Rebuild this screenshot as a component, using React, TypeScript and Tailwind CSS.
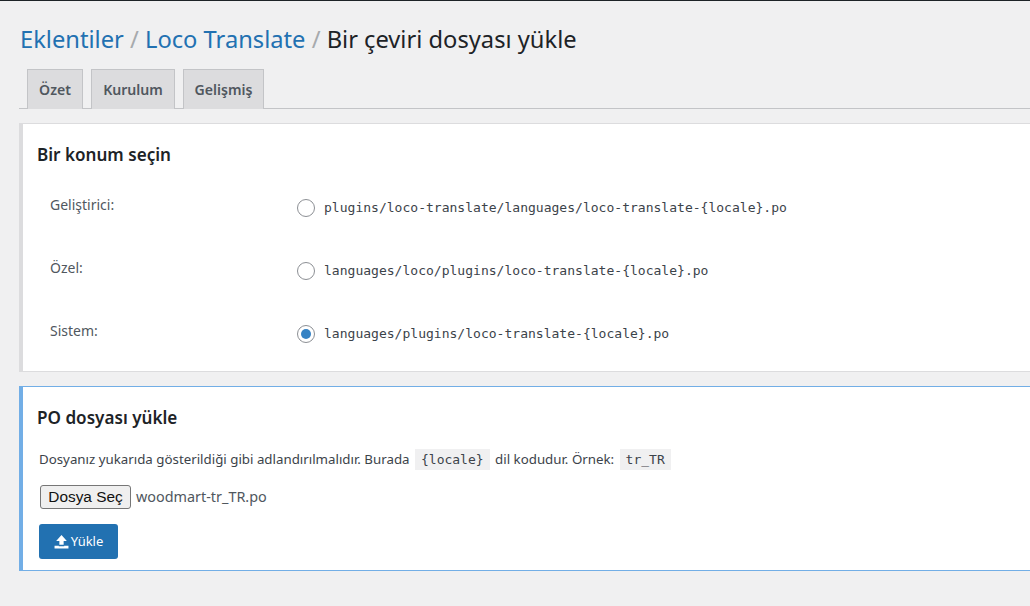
const sans = "font-['Noto_Sans','Open_Sans',sans-serif]";

const tabs = [
  { label: "Özet", width: "w-[56px]" },
  { label: "Kurulum", width: "w-[84px]" },
  { label: "Gelişmiş", width: "w-[81px]" },
];

const locations = [
  { label: "Geliştirici:", path: "plugins/loco-translate/languages/loco-translate-{locale}.po", checked: false },
  { label: "Özel:", path: "languages/loco/plugins/loco-translate-{locale}.po", checked: false },
  { label: "Sistem:", path: "languages/plugins/loco-translate-{locale}.po", checked: true },
];

const Code = ({ children }: { children: string }) => (
  <code className="mx-[2px] bg-[#f0f0f1] px-[6px] py-[3px] font-['DejaVu_Sans_Mono',monospace] text-[13px] text-[#3c434a]">
    {children}
  </code>
);

const Radio = ({ checked }: { checked: boolean }) => (
  <span className="flex h-[18px] w-[18px] shrink-0 items-center justify-center rounded-full border border-[#8c8f94] bg-white">
    {checked && <span className="h-[10px] w-[10px] rounded-full bg-[#3582c4]" />}
  </span>
);

export default function App() {
  return (
    <div className={`${sans} h-[606px] w-[1030px] overflow-hidden border-t border-t-[#1d2327] bg-[#f0f0f1] text-[#3c434a]`}>
      <div className="pl-[19px]">
        <h1 className="ml-px mt-[20px] h-[37px] text-[23.7px] leading-[36px] whitespace-nowrap text-[#1d2327]">
          <a className="text-[#2271b1]">Eklentiler</a>
          <span className="text-[#a7aaad]"> / </span>
          <a className="text-[#2271b1]">Loco Translate</a>
          <span className="text-[#a7aaad]"> / </span>
          Bir çeviri dosyası yükle
        </h1>

        <nav className="mt-[11px] flex h-[40px] gap-2 border-b border-[#c3c4c7] pl-2">
          {tabs.map((tab) => (
            <a
              key={tab.label}
              className={`${tab.width} h-[40px] border border-b-0 border-[#c3c4c7] bg-[#dcdcde] text-center text-[14.1px] font-semibold leading-[40px] text-[#50575e]`}
            >
              {tab.label}
            </a>
          ))}
        </nav>

        <section className="mt-[14px] h-[249px] border border-r-0 border-l-4 border-[#dcdcde] bg-white pl-[14px]">
          <h2 className="mt-[18px] h-[26px] text-[17.1px] font-semibold leading-[26px] text-[#1d2327]">Bir konum seçin</h2>
          <div className="mt-[25px] flex flex-col">
            {locations.map((loc) => (
              <div key={loc.path} className="flex h-[63px] items-start pl-[13px]">
                <span className="h-[24px] w-[247px] text-[14px] leading-[24px] text-[#50575e]">{loc.label}</span>
                <span className="mt-[5px] flex items-center gap-[9px]">
                  <Radio checked={loc.checked} />
                  <span className="font-['DejaVu_Sans_Mono',monospace] text-[13.04px] leading-[20px] text-[#3c434a]">{loc.path}</span>
                </span>
              </div>
            ))}
          </div>
        </section>

        <section className="mt-[14px] h-[185px] border border-r-0 border-l-4 border-[#72aee6] bg-white pl-[14px]">
          <h2 className="mt-[18px] h-[26px] text-[17.1px] font-semibold leading-[26px] text-[#1d2327]">PO dosyası yükle</h2>
          <p className="ml-[2px] mt-[16px] h-[24px] whitespace-nowrap text-[13.3px] leading-[24px] text-[#3c434a]">
            Dosyanız yukarıda gösterildiği gibi adlandırılmalıdır. Burada <Code>{"{locale}"}</Code> dil kodudur. Örnek: <Code>tr_TR</Code>
          </p>
          <div className="ml-[3px] mt-[14px] flex h-[24px] items-center gap-[5px]">
            <span className="flex h-[24px] w-[91px] items-center justify-center rounded-[3px] border border-[#767676] bg-[#efefef] font-['Liberation_Sans',sans-serif] text-[15.4px] text-[#111]">
              Dosya Seç
            </span>
            <span className="text-[14.4px] text-[#50575e]">woodmart-tr_TR.po</span>
          </div>
          <button className="ml-[2px] mt-[15px] flex h-[35px] w-[79px] items-center justify-center gap-[2px] rounded-[3px] bg-[#2271b1] text-[13px] text-white">
            <svg width="15" height="15" viewBox="0 0 14 14" fill="currentColor" aria-hidden="true">
              <path d="M7 1 L12 6.5 H9 V10 H5 V6.5 H2 Z" />
              <path d="M0.5 11 H4.5 V11.5 H9.5 V11 H13.5 V13.5 H0.5 Z" />
            </svg>
            Yükle
          </button>
        </section>
      </div>
    </div>
  );
}
